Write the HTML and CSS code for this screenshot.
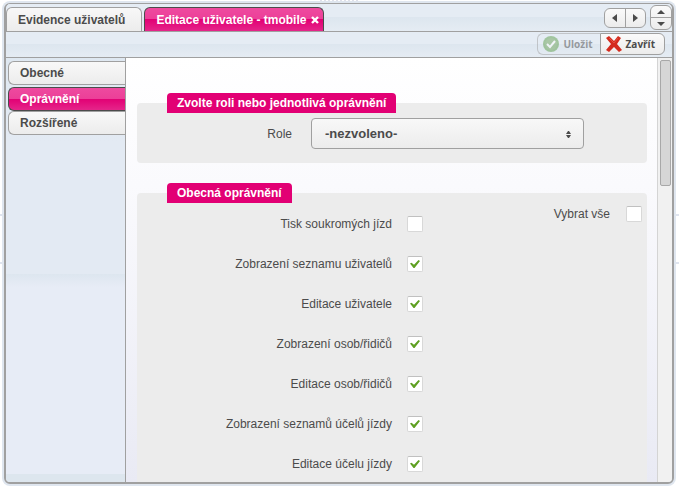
FILE: index.html
```html
<!DOCTYPE html>
<html lang="cs">
<head>
    <meta charset="UTF-8">
    <meta name="viewport" content="width=device-width, initial-scale=1.0">
    <title>Editace uživatele</title>
    <link rel="stylesheet" href="styles.css">
</head>
<body>
    <div class="window">
        <div class="tabbar">
            <nav class="tabs">
                <a href="#" class="tab">Evidence uživatelů</a>
                <div class="tab active">
                    <a href="#" class="tab-link">Editace uživatele - tmobile</a>
                    <button type="button" class="tab-close" aria-label="Zavřít záložku">
                        <svg width="8" height="8" viewBox="0 0 8 8"><path d="M1 1l6 6M7 1l-6 6" stroke="#fff" stroke-width="2.4"/></svg>
                    </button>
                </div>
            </nav>
            <div class="pager">
                <button type="button" aria-label="Předchozí"><svg width="5" height="8" viewBox="0 0 5 8"><path d="M5 0v8L0 4z"/></svg></button>
                <button type="button" aria-label="Další"><svg width="5" height="8" viewBox="0 0 5 8"><path d="M0 0v8l5-4z"/></svg></button>
            </div>
            <div class="pager vertical">
                <button type="button" aria-label="Nahoru"><svg width="8" height="4" viewBox="0 0 8 4"><path d="M0 4h8L4 0z"/></svg></button>
                <button type="button" aria-label="Dolů"><svg width="8" height="4" viewBox="0 0 8 4"><path d="M0 0h8L4 4z"/></svg></button>
            </div>
        </div>

        <div class="toolbar">
            <button type="button" class="tool" disabled>
                <svg width="16" height="16" viewBox="0 0 16 16"><circle cx="8" cy="8" r="8" fill="#5f9f4c"/><circle cx="8" cy="8" r="6" fill="#6fa35a"/><path d="M4 8l3 3 5-6" fill="none" stroke="#fff" stroke-width="2"/></svg>
                Uložit
            </button>
            <button type="button" class="tool">
                <svg width="16" height="16" viewBox="0 0 16 16"><path d="M3 0l5 5 4-5 3 2-4 6 5 6-3 2-5-5-5 5-3-2 5-6-5-6z" fill="#d42b1e"/><path d="M3 2l5 5 4-5" fill="none" stroke="#e4503f" stroke-width="1"/></svg>
                Zavřít
            </button>
        </div>

        <div class="body">
            <nav class="sidebar">
                <a href="#" class="side-item">Obecné</a>
                <a href="#" class="side-item active">Oprávnění</a>
                <a href="#" class="side-item">Rozšířené</a>
            </nav>

            <form class="content">
                <fieldset>
                    <legend>Zvolte roli nebo jednotlivá oprávnění</legend>
                    <div class="role">
                        <label for="role">Role</label>
                        <div class="select">
                            <select id="role"><option>-nezvoleno-</option></select>
                            <svg width="5" height="7" viewBox="0 0 5 7"><path d="M0 3h5L3 0H2zM0 4h5L3 7H2z"/></svg>
                        </div>
                    </div>
                </fieldset>

                <fieldset>
                    <legend>Obecná oprávnění</legend>
                    <div class="permissions">
                        <div class="list">
                            <div class="row"><label for="p1">Tisk soukromých jízd</label><input type="checkbox" id="p1"></div>
                            <div class="row"><label for="p2">Zobrazení seznamu uživatelů</label><input type="checkbox" id="p2" checked></div>
                            <div class="row"><label for="p3">Editace uživatele</label><input type="checkbox" id="p3" checked></div>
                            <div class="row"><label for="p4">Zobrazení osob/řidičů</label><input type="checkbox" id="p4" checked></div>
                            <div class="row"><label for="p5">Editace osob/řidičů</label><input type="checkbox" id="p5" checked></div>
                            <div class="row"><label for="p6">Zobrazení seznamů účelů jízdy</label><input type="checkbox" id="p6" checked></div>
                            <div class="row"><label for="p7">Editace účelu jízdy</label><input type="checkbox" id="p7" checked></div>
                        </div>
                        <div class="select-all"><label for="all">Vybrat vše</label><input type="checkbox" id="all"></div>
                    </div>
                </fieldset>
            </form>

            <div class="scrollbar"><div class="thumb"></div></div>
        </div>
    </div>
</body>
</html>
```
FILE: styles.css
```css
* {
    margin: 0;
    padding: 0;
    box-sizing: border-box;
}

body {
    height: 100vh;
    padding: 3px 5px 4px 4px;
    overflow: hidden;
    font-family: "Liberation Sans", Arial, sans-serif;
    font-size: 12px;
    color: #4b4b4b;
    background:
        linear-gradient(#dfe4ee, #dfe4ee) 0 214px / 100% 2px no-repeat,
        linear-gradient(#dfe4ee, #dfe4ee) 0 262px / 100% 2px no-repeat,
        repeating-linear-gradient(90deg, #dfe0ea 0 2px, #fff 2px 4px) 320px 0 / 40px 1px no-repeat,
        #fff;
}

a {
    color: inherit;
    text-decoration: none;
}

button {
    font: inherit;
    color: inherit;
    border: 0;
    background: none;
}

svg {
    display: block;
    flex: none;
}

.window {
    height: 100%;
    display: flex;
    flex-direction: column;
    overflow: hidden;
    border: 2px solid #a0a0a0;
    border-top-width: 1px;
    border-radius: 6px;
    box-shadow: 0 0 0 2px #dfe6ef;
    background: #e3eaf2;
}

.tabbar {
    height: 28px;
    flex: none;
    display: flex;
    align-items: center;
    gap: 4px;
    border-bottom: 1px solid #a0a0a0;
    background: linear-gradient(#e5ecf4 0 50%, #dde6ef 50%, #e5ecf3);
}

.tabs {
    flex: 1;
    align-self: flex-end;
    display: flex;
    gap: 2px;
}

.tab {
    height: 24px;
    display: flex;
    align-items: center;
    padding: 0 16px 0 11px;
    border: 1px solid #a0a0a0;
    border-bottom: 0;
    border-radius: 6px 6px 0 0;
    font-weight: bold;
    background: linear-gradient(#f8f8f8, #ececec);
}

.tab.active,
.side-item.active {
    color: #fff;
    border-color: #4b4b4b;
    background: linear-gradient(#ee4a9f, #ec3f98 50%, #e20074 50%, #e5258a);
}

.tab.active {
    gap: 5px;
    padding: 0 4px 0 11px;
}

.pager {
    height: 20px;
    display: flex;
    border: 1px solid #a0a0a0;
    border-radius: 6px;
    fill: #4b4b4b;
    background: linear-gradient(#fafafa, #ececec);
}

.pager button {
    flex: 1;
    width: 20px;
    display: flex;
    align-items: center;
    justify-content: center;
}

.pager button + button {
    border-left: 1px solid #a0a0a0;
}

.pager.vertical {
    height: 25px;
    flex-direction: column;
}

.pager.vertical button + button {
    border-left: 0;
    border-top: 1px solid #a0a0a0;
}

.toolbar {
    height: 26px;
    flex: none;
    display: flex;
    justify-content: flex-end;
    padding: 1px 7px 2px;
    border-bottom: 1px solid #a0a0a0;
    background: linear-gradient(#e5ecf4 0 50%, #dde6ef 50%, #e5ecf3);
}

.tool {
    height: 22px;
    display: flex;
    align-items: center;
    gap: 4px;
    padding: 0 9px 0 5px;
    border: 1px solid #a0a0a0;
    border-radius: 0 6px 6px 0;
    font-family: "Open Sans", "Noto Sans", sans-serif;
    font-size: 10px;
    font-weight: bold;
    background: linear-gradient(#fafafa, #ececec);
}

.tool:disabled {
    border-right: 0;
    border-radius: 6px 0 0 6px;
    padding-right: 7px;
    background: none;
    opacity: 0.5;
}

.body {
    flex: 1;
    min-height: 0;
    display: flex;
}

.sidebar {
    width: 120px;
    flex: none;
    display: flex;
    flex-direction: column;
    padding: 3px 0 0 2px;
    border-right: 1px solid #a0a0a0;
    background: linear-gradient(#dfe8f1, #e3eaf3 20%, #e3eaf3 51%, #dde6ef 51%, #e7ecf6 54%, #e7ecf6 98%, #dde6ee 98%);
}

.side-item {
    height: 24px;
    padding-left: 11px;
    border: 1px solid #a0a0a0;
    border-right: 0;
    border-radius: 6px 0 0 6px;
    font-weight: bold;
    line-height: 23px;
    background: linear-gradient(#f8f8f8, #ececec);
}

.side-item.active {
    margin-top: 2px;
}

.content {
    flex: 1;
    min-width: 0;
    overflow: hidden;
    padding: 35px 10px 0 11px;
    background: linear-gradient(#fff, #fafafd 30%, #e9eaf4);
}

fieldset {
    min-width: 0;
    margin-bottom: 20px;
    border: 0;
    border-radius: 4px;
    background: #ececec;
}

legend {
    height: 20px;
    margin-left: 30px;
    padding: 0 10px;
    border-radius: 4px 4px 0 0;
    font-weight: bold;
    line-height: 20px;
    color: #fff;
    background: #e20074;
}

.role {
    display: grid;
    grid-template-columns: 155px 1fr;
    align-items: center;
    gap: 19px;
    padding: 5px 63px 14px 0;
    text-align: right;
}

.select {
    position: relative;
    display: flex;
}

.select select {
    appearance: none;
    width: 100%;
    height: 31px;
    padding: 0 13px;
    border: 1px solid #a0a0a0;
    border-radius: 4px;
    font: bold 13px "Liberation Sans", Arial, sans-serif;
    color: #4b4b4b;
    background: linear-gradient(#f8f8f8, #ececec);
}

.select svg {
    position: absolute;
    top: 13px;
    right: 13px;
    fill: #4b4b4b;
}

.permissions {
    display: grid;
    padding-top: 1px;
}

.list,
.select-all {
    grid-area: 1 / 1;
}

.row {
    height: 40px;
    display: grid;
    grid-template-columns: 50% 1fr;
    align-items: center;
    gap: 15px;
    text-align: right;
}

.row input,
.select-all input {
    appearance: none;
    width: 16px;
    height: 16px;
    border: 1px solid #d8d8d8;
    border-top-color: #c0c0c0;
    border-radius: 2px;
    background: #fff;
}

.row input:checked::before {
    content: "";
    display: block;
    width: 10px;
    height: 8px;
    margin: 3px 2px;
    background: #5fa022;
    clip-path: polygon(0 45%, 15% 35%, 40% 60%, 85% 0, 100% 12%, 45% 100%, 35% 100%);
}

.select-all {
    justify-self: end;
    align-self: start;
    display: flex;
    align-items: center;
    gap: 16px;
    height: 20px;
    padding-right: 5px;
}

.scrollbar {
    width: 15px;
    flex: none;
    padding: 2px;
    border-left: 1px solid #d4d4d4;
    background: #f1f1f1;
}

.thumb {
    width: 11px;
    height: 126px;
    border: 1px solid #a8a8a8;
    border-radius: 2px;
    background: #d6d6d6;
}
```
